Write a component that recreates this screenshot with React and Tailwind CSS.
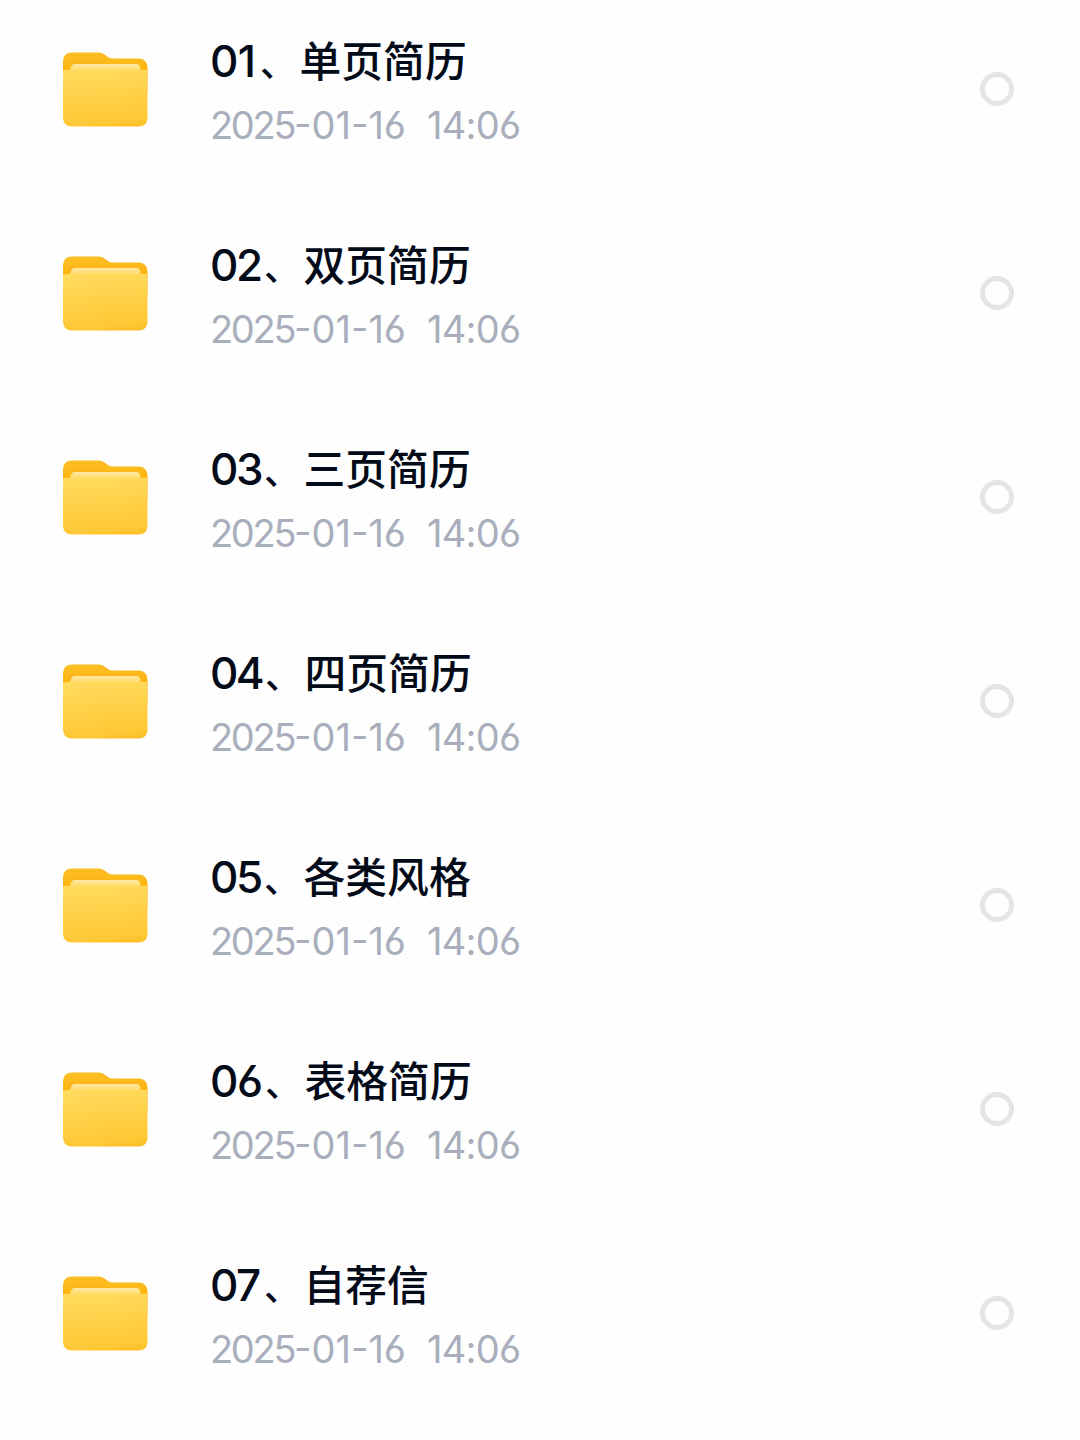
const folders = [
  { id: '01', name: '单页简历', numberWidth: 'w-[47px] tracking-[-0.6px]' },
  { id: '02', name: '双页简历', numberWidth: 'w-[51px] tracking-[-2.4px]' },
  { id: '03', name: '三页简历', numberWidth: 'w-[51px] tracking-[-2.4px]' },
  { id: '04', name: '四页简历', numberWidth: 'w-[52px] tracking-[-2.6px]' },
  { id: '05', name: '各类风格', numberWidth: 'w-[51px] tracking-[-2.4px]' },
  { id: '06', name: '表格简历', numberWidth: 'w-[52px] tracking-[-1.5px]' },
  { id: '07', name: '自荐信', numberWidth: 'w-[51px] tracking-[-1.5px]' },
];

function FolderIcon() {
  return (
    <svg viewBox="0 0 85 75" className="h-[75px] w-[85px] shrink-0" fill="none">
      <defs>
        <linearGradient id="folder-back" x1="0" y1="0" x2="0" y2="1">
          <stop offset="0" stopColor="#fdbf25" />
          <stop offset="0.4" stopColor="#fcb514" />
        </linearGradient>
        <linearGradient id="folder-front" x1="0.42" y1="0" x2="0.58" y2="1">
          <stop offset="0" stopColor="#ffda5c" />
          <stop offset="0.94" stopColor="#ffc734" />
          <stop offset="1" stopColor="#fbc02a" />
        </linearGradient>
        <linearGradient id="folder-paper" x1="0" y1="0" x2="0" y2="1">
          <stop offset="0" stopColor="#ffe9a6" />
          <stop offset="0.5" stopColor="#ffdc6a" />
        </linearGradient>
      </defs>
      <path d="M0 10Q0 0.5 9 0.5H36Q39 0.5 41.5 2.5L45 5Q47 6.5 50 6.5H75Q84.5 6.5 84.5 16V40H0Z" fill="url(#folder-back)" />
      <path d="M5 24L8 15Q9 12 12 12H73Q76 12 77 15L79 24Z" fill="url(#folder-paper)" />
      <path d="M0 18H84.5V65.5Q84.5 74.5 75.5 74.5H9Q0 74.5 0 65.5Z" fill="url(#folder-front)" />
    </svg>
  );
}

function FolderRow({ folder }) {
  return (
    <li className="flex h-[178px] items-center pr-[66px] pl-[63px]">
      <FolderIcon />
      <div className="ml-[62px] flex-1 pt-[5px]">
        <h2 className="flex h-[63px] items-center text-[42px] leading-none font-medium text-[#030a18]">
          <span className={`${folder.numberWidth} shrink-0 pt-[4px] font-[Inter,sans-serif] text-[44px] [font-feature-settings:'cv03']`}>
            {folder.id}
          </span>
          <span className="w-[42px] shrink-0 pt-[4px] pl-[3px] font-['Noto_Sans_CJK_SC',sans-serif] text-[36px]">、</span>
          <span className="pt-[2px] pl-[0.5px] font-['Noto_Sans_CJK_SC',sans-serif] text-[41.8px]">{folder.name}</span>
        </h2>
        <p className="flex h-[65px] items-center pt-[4px] font-[Inter,sans-serif] text-[38px] leading-none whitespace-nowrap text-[#a9aebc] [font-feature-settings:'cv03']">
          <span className="w-[84px] tracking-[-2.3px]">2025</span>
          <span className="w-[133px]">-01-16</span>
          <span className="tracking-[-0.7px]">14:06</span>
        </p>
      </div>
      <span className="size-[34px] shrink-0 rounded-full border-[5px] border-[#e5e5e5]" />
    </li>
  );
}

export default function App() {
  return (
    <main className="h-[1440px] w-[1080px] overflow-hidden bg-[#fefefe]">
      <ul className="flex flex-col gap-[26px]">
        {folders.map((folder) => (
          <FolderRow key={folder.id} folder={folder} />
        ))}
      </ul>
    </main>
  );
}
